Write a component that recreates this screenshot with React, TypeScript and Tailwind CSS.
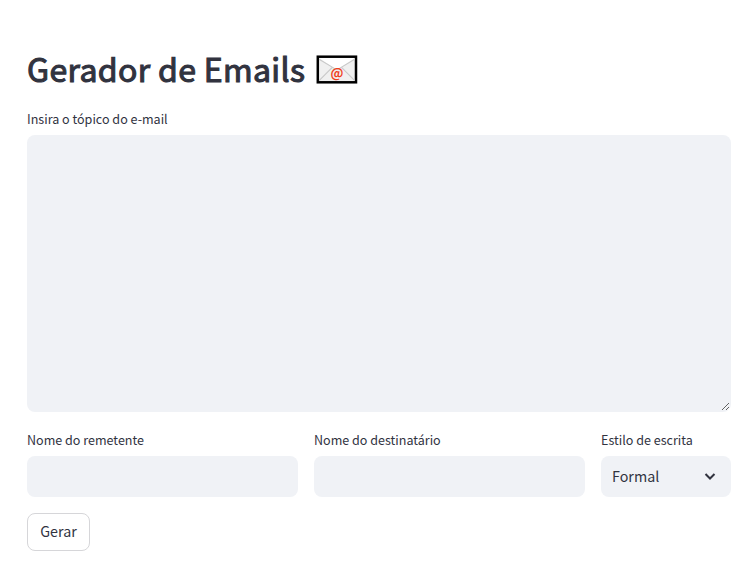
function Envelope() {
  return (
    <svg className="mt-[3px]" width="42" height="29" viewBox="0 0 42 29" aria-hidden="true">
      <rect x="1.8" y="1.7" width="38.2" height="25.6" fill="#f0f0f0" stroke="#000" strokeWidth="2.5" />
      <path d="M3.1 3h35.6L23.5 13.2q-2.6 1.8-5.2 0Z" fill="#fff" />
      <path d="M3.1 4.2l15.2 9.2q2.6 1.6 5.2 0L38.7 4.2M3.1 25.6 16 12.6M38.7 25.6 25.8 12.6" fill="none" stroke="#c8c8c8" strokeWidth="1.1" />
      <text x="20.9" y="23" textAnchor="middle" fontSize="12.8" fontWeight="700" fill="#f0401c" fontFamily="Noto Sans CJK SC, sans-serif">@</text>
    </svg>
  );
}

function Field({ label }: { label: string }) {
  return (
    <label className="flex flex-1 flex-col text-[12.55px] leading-5">
      <span>{label}</span>
      <input className="mt-[6px] h-[41px] w-full rounded-lg bg-[#f0f2f6] px-3 text-[14.3px] outline-none" />
    </label>
  );
}

export default function App() {
  return (
    <main className="flex h-[582px] flex-col bg-white pl-[27px] pr-6 text-[#31333f] [font-family:'Noto_Sans_CJK_SC','Open_Sans',sans-serif]">
      <h1 className="mt-[48px] flex h-10 items-center whitespace-nowrap text-[32px] font-normal">
        <span className="w-[289px] tracking-[0.35px] [-webkit-text-stroke:1.1px_#31333f]">Gerador de Emails</span>
        <Envelope />
      </h1>
      <label className="mt-[21px] flex flex-col text-[12.55px] leading-5">
        <span>Insira o tópico do e-mail</span>
        <textarea className="mt-[6px] h-[277px] w-full resize rounded-lg border border-transparent bg-[#f0f2f6] p-3 outline-none" />
      </label>
      <div className="mt-[18px] flex gap-4">
        <Field label="Nome do remetente" />
        <Field label="Nome do destinatário" />
        <div className="flex w-[130px] flex-col text-[12.55px] leading-5">
          <span>Estilo de escrita</span>
          <button className="mt-[6px] flex h-[41px] items-center justify-between rounded-lg bg-[#f0f2f6] pl-[11px] pr-[15px] text-[14.3px]">
            <span className="pb-0.5">Formal</span>
            <svg width="12" height="8" viewBox="0 0 12 8" fill="none" stroke="currentColor" strokeWidth="2" aria-hidden="true">
              <path d="m1.5 1 4.5 4.5L10.500 1" />
            </svg>
          </button>
        </div>
      </div>
      <button className="mt-4 h-[38px] w-[63px] rounded-lg border border-[#d6d6d9] bg-white pb-0.5 text-[14.3px]">
        Gerar
      </button>
    </main>
  );
}
